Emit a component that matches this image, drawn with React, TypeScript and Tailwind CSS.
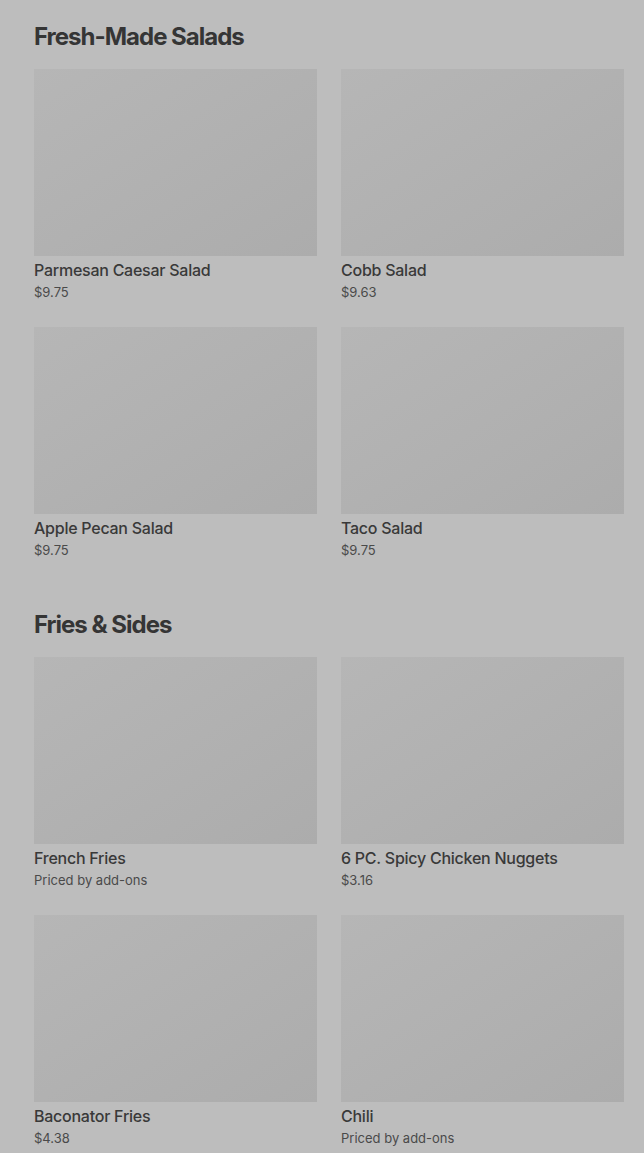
const sections = [
  {
    title: "Fresh-Made Salads",
    items: [
      { name: "Parmesan Caesar Salad", price: "$9.75" },
      { name: "Cobb Salad", price: "$9.63" },
      { name: "Apple Pecan Salad", price: "$9.75" },
      { name: "Taco Salad", price: "$9.75" },
    ],
  },
  {
    title: "Fries & Sides",
    items: [
      { name: "French Fries", price: "Priced by add-ons" },
      { name: "6 PC. Spicy Chicken Nuggets", price: "$3.16" },
      { name: "Baconator Fries", price: "$4.38" },
      { name: "Chili", price: "Priced by add-ons" },
    ],
  },
]

export default function App() {
  return (
    <div
      className="min-h-screen bg-[#bdbdbd] pl-[34px] pr-[20px] pt-[21px]"
      style={{ fontFamily: "Inter, 'Noto Sans', sans-serif" }}
    >
      <div className="flex flex-col gap-[49px]">
        {sections.map((section) => (
          <section key={section.title}>
            <h2 className="mb-[16px] text-[24px] font-bold leading-8 tracking-[-1px] text-[#353535]">
              {section.title}
            </h2>
            <div className="grid grid-cols-2 gap-x-6 gap-y-[25px]">
              {section.items.map((item) => (
                <div key={item.name}>
                  <div className="h-[187px] bg-gradient-to-br from-[#b6b6b6] to-[#acacac]" />
                  <div className="mt-[2px] text-[16px] font-medium leading-6 tracking-[-0.25px] text-[#393939]">
                    {item.name}
                  </div>
                  <div className="mt-[1px] text-[13px] leading-[19px] text-[#4a4a4a]">{item.price}</div>
                </div>
              ))}
            </div>
          </section>
        ))}
      </div>
    </div>
  )
}
